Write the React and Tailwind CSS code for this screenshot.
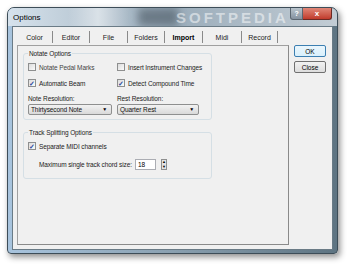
import React from 'react';

const tabs = ['Color', 'Editor', 'File', 'Folders', 'Import', 'Midi', 'Record'];
const tabWidths = ['w-[36px]', 'w-[37px]', 'w-[38px]', 'w-[37px]', 'w-[38px]', 'w-[39px]', 'w-[36px]'];

const Check = ({ checked, label, disabled }) => (
  <div className="flex items-center gap-[3px] h-[10px]">
    <div className="w-[8px] h-[8px] border border-[#8e8f8f] bg-gradient-to-br from-[#dcdcdc] to-[#fbfbfb] flex items-center justify-center">
      {checked && <span className="text-[7px] leading-none text-[#2d4ca0] font-bold">✓</span>}
    </div>
    <span className={disabled ? 'text-[#444]' : 'text-[#222]'}>{label}</span>
  </div>
);

const Dropdown = ({ value, width }) => (
  <div className={`${width} h-[11px] border border-[#8e8f8f] rounded-[2px] bg-gradient-to-b from-[#f2f2f2] to-[#d9d9d9] flex items-center justify-between pl-[2px] pr-[4px]`}>
    <span className="text-[#111]">{value}</span>
    <span className="text-[5px] leading-none text-black">▼</span>
  </div>
);

const Group = ({ title, children, height }) => (
  <div className={`relative border border-[#d5dfe5] rounded-[3px] ${height} pt-[7px] pl-[4px]`}>
    <div className="absolute -top-[5px] left-[4px] bg-[#f0f0f0] px-[1px] leading-[9px] text-[#222]">{title}</div>
    {children}
  </div>
);

export default function App() {
  return (
    <div className="w-[350px] h-[265px] bg-white pt-[7px] pl-[7px] text-[6.5px] leading-[9px] tracking-[-0.1px]" style={{ fontFamily: '"Liberation Sans", Arial, sans-serif' }}>
      <div className="w-[331px] h-[247px] rounded-t-[7px] rounded-b-[4px] border border-[#3d4d58] bg-gradient-to-r from-[#a8c4de] via-[#8aa0b0] to-[#5e7482] shadow-[2px_3px_6px_rgba(0,0,0,0.45)] flex flex-col">
        <div className="h-[18px] flex items-start relative rounded-t-[6px] bg-gradient-to-r from-[#d6e2ec] via-[#9aacba] to-[#c2ccd4] overflow-hidden">
          <span className="absolute left-[130px] top-0 w-[40px] h-[18px] bg-[#55636f] opacity-70 blur-[4px]"></span>
          <span className="absolute left-[60px] top-0 w-[60px] h-[18px] bg-gradient-to-r from-transparent via-white/50 to-transparent"></span>
          <span className="absolute left-[168px] top-[1px] text-[15px] leading-[17px] font-bold tracking-[3px] text-white/50">SOFTPEDIA</span>
          <span className="relative ml-[5px] mt-[5px] text-[8px] leading-[10px] tracking-normal text-black">Options</span>
          <div className="relative ml-auto mr-[5px] flex">
            <div className="w-[13px] h-[12px] rounded-bl-[3px] border border-[#5b6670] border-t-0 bg-gradient-to-b from-[#b9c4cc] to-[#8592a0] flex items-center justify-center text-white text-[7px] font-bold">?</div>
            <div className="w-[29px] h-[12px] rounded-br-[3px] border border-[#6b2a24] border-t-0 border-l-0 bg-gradient-to-b from-[#e08677] to-[#c0392b] flex items-center justify-center text-white text-[8px] font-bold">x</div>
          </div>
        </div>
        <div className="flex-1 mx-[4px] mb-[3px] border border-[#6a7b86] bg-[#f0f0f0] flex pl-[4px] pt-[2px]">
          <div className="flex flex-col">
            <div className="flex h-[16px] text-[7px] tracking-normal">
              {tabs.map((t, i) => (
                <div key={t} className={`${tabWidths[i]} flex items-center justify-center border-r border-[#8a8a8a] my-[2px] ${t === 'Import' ? 'font-bold text-black' : 'text-[#222]'}`}>{t}</div>
              ))}
            </div>
            <div className="w-[272px] h-[200px] border border-[#a0a0a0] border-r-[#8a8a8a] border-b-[#8a8a8a] bg-[#f0f0f0] pt-[7px] pl-[5px]">
              <div className="w-[189px] flex flex-col gap-[12px]">
                <Group title="Notate Options" height="h-[67px]">
                  <div className="flex flex-col gap-[6px] pt-[1px]">
                    <div className="flex">
                      <div className="w-[89px]"><Check label="Notate Pedal Marks" disabled /></div>
                      <Check label="Insert Instrument Changes" />
                    </div>
                    <div className="flex">
                      <div className="w-[89px]"><Check label="Automatic Beam" checked /></div>
                      <Check label="Detect Compound Time" checked />
                    </div>
                    <div className="flex">
                      <div className="w-[89px] flex flex-col gap-[1px]">
                        <span className="text-[#222]">Note Resolution:</span>
                        <Dropdown value="Thirtysecond Note" width="w-[84px]" />
                      </div>
                      <div className="flex flex-col gap-[1px]">
                        <span className="text-[#222]">Rest Resolution:</span>
                        <Dropdown value="Quarter Rest" width="w-[82px]" />
                      </div>
                    </div>
                  </div>
                </Group>
                <Group title="Track Splitting Options" height="h-[47px]">
                  <div className="flex flex-col gap-[8px] pt-[1px]">
                    <Check label="Separate MIDI channels" checked />
                    <div className="flex items-center pl-[11px] gap-[3px]">
                      <span className="text-[#222]">Maximum single track chord size:</span>
                      <div className="w-[21px] h-[11px] border border-[#abadb3] bg-white pl-[2px] flex items-center text-black">18</div>
                      <div className="ml-[2px] w-[6px] h-[11px] flex flex-col border border-[#8e8f8f] bg-[#e4e4e4]">
                        <div className="flex-1 flex items-center justify-center text-[4px] leading-none">▲</div>
                        <div className="flex-1 flex items-center justify-center text-[4px] leading-none">▼</div>
                      </div>
                    </div>
                  </div>
                </Group>
              </div>
            </div>
          </div>
          <div className="flex flex-col gap-[4px] ml-[5px] mt-[16px] tracking-normal">
            <div className="w-[32px] h-[12px] rounded-[2px] border border-[#3c7fb1] bg-gradient-to-b from-[#eaf6fd] to-[#d9f0fc] flex items-center justify-center text-black">OK</div>
            <div className="w-[32px] h-[12px] rounded-[2px] border border-[#707070] bg-gradient-to-b from-[#f2f2f2] to-[#dddddd] flex items-center justify-center text-black">Close</div>
          </div>
        </div>
      </div>
    </div>
  );
}
